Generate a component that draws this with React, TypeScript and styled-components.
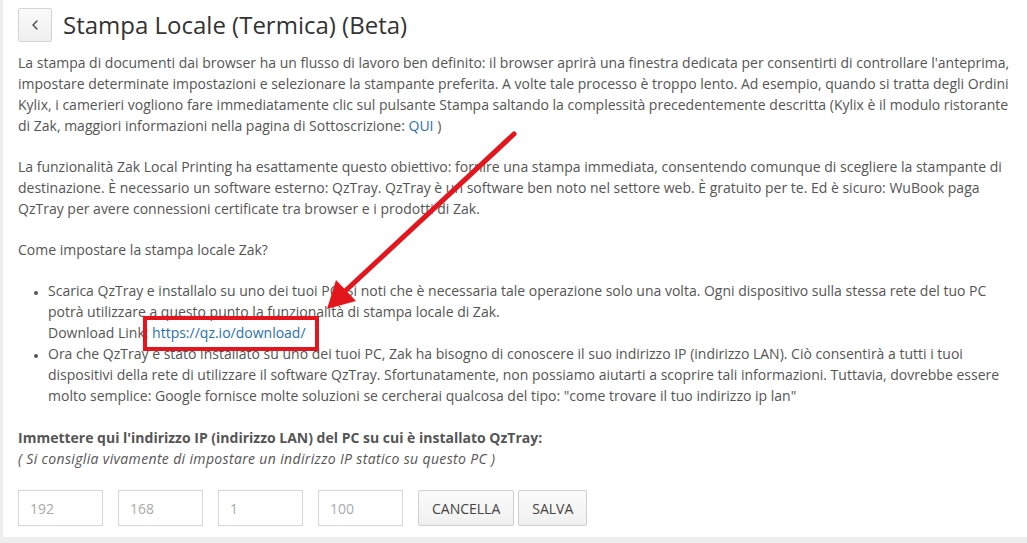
import React from 'react';
import styled, { createGlobalStyle } from 'styled-components';
import { ChevronLeft } from 'lucide-react';

const GlobalStyle = createGlobalStyle`
  * {
    margin: 0;
    padding: 0;
    box-sizing: border-box;
  }

  html, body {
    width: 100%;
    height: 100%;
    overflow: hidden;
    background-color: #eeeeee;
    font-family: "Open Sans", "Liberation Sans", sans-serif;
  }

  #root {
    width: 100%;
    height: 100%;
  }

  input, button {
    font-family: inherit;
  }
`;

const Page = styled.div`
  width: 100%;
  height: 100%;
  padding: 0 0 6px 3px;
`;

const Panel = styled.div`
  position: relative;
  height: 100%;
  background-color: #ffffff;
  padding: 8px 14px 0 15px;
  color: #555555;
  font-size: 14px;
  line-height: 21px;
`;

const Header = styled.div`
  display: flex;
  align-items: center;
  gap: 11px;
  margin-bottom: 10px;
`;

const BackButton = styled.button`
  width: 34px;
  height: 34px;
  display: flex;
  align-items: center;
  justify-content: center;
  border: 1px solid #d4d4d4;
  border-radius: 2px;
  background: linear-gradient(#fafafa, #efefef);
  color: #444;
  cursor: pointer;
`;

const Title = styled.h1`
  font-size: 24px;
  font-weight: 400;
  color: #333333;
  line-height: 34px;
`;

const Paragraph = styled.p`
  margin-bottom: 20px;
`;

const Link = styled.a`
  color: #2a6fb0;
  text-decoration: none;
`;

const List = styled.ul`
  margin: 0 0 21px 30px;
  list-style: disc;

  li::marker {
    font-size: 10px;
  }
`;

const Label = styled.div`
  font-weight: 700;
`;

const Hint = styled.div`
  font-style: italic;
  letter-spacing: 0.35px;
  margin-bottom: 21px;
`;

const FormRow = styled.div`
  display: flex;
  gap: 15px;
`;

const IpInput = styled.input`
  width: 85px;
  height: 36px;
  border: 1px solid #d6d6d6;
  padding: 0 11px;
  font-size: 14px;
  color: #999;
  background: #fff;
  outline: none;

  &::placeholder {
    color: #aaaaaa;
  }
`;

const Buttons = styled.div`
  display: flex;
  gap: 4px;
`;

const ActionButton = styled.button`
  height: 36px;
  padding: 0 13px;
  border: 1px solid #cfcfcf;
  border-radius: 2px;
  background: linear-gradient(#fbfbfb, #f0f0f0);
  color: #444;
  font-size: 14px;
  cursor: pointer;
`;

const Overlay = styled.svg`
  position: absolute;
  left: -3px;
  top: 0;
  pointer-events: none;
`;

const App: React.FC = () => {
  return (
    <>
      <GlobalStyle />
      <Page>
        <Panel>
          <Header>
            <BackButton>
              <ChevronLeft size={16} strokeWidth={2} />
            </BackButton>
            <Title>Stampa Locale (Termica) (Beta)</Title>
          </Header>
          <Paragraph>
            La stampa di documenti dai browser ha un flusso di lavoro ben definito: il browser aprirà una finestra dedicata per consentirti di controllare l'anteprima, impostare determinate impostazioni e selezionare la stampante preferita. A volte tale processo è troppo lento. Ad esempio, quando si tratta degli Ordini Kylix, i camerieri vogliono fare immediatamente clic sul pulsante Stampa saltando la complessità precedentemente descritta (Kylix è il modulo ristorante di Zak, maggiori informazioni nella pagina di Sottoscrizione: <Link href="#">QUI</Link> )
          </Paragraph>
          <Paragraph>
            La funzionalità Zak Local Printing ha esattamente questo obiettivo: fornire una stampa immediata, consentendo comunque di scegliere la stampante di destinazione. È necessario un software esterno: QzTray. QzTray è un software ben noto nel settore web. È gratuito per te. Ed è sicuro: WuBook paga QzTray per avere connessioni certificate tra browser e i prodotti di Zak.
          </Paragraph>
          <Paragraph>Come impostare la stampa locale Zak?</Paragraph>
          <List>
            <li>
              Scarica QzTray e installalo su uno dei tuoi PC. Si noti che è necessaria tale operazione solo una volta. Ogni dispositivo sulla stessa rete del tuo PC potrà utilizzare a questo punto la funzionalità di stampa locale di Zak.
              <br />
              Download Link: <Link href="#">https://qz.io/download/</Link>
            </li>
            <li>
              Ora che QzTray è stato installato su uno dei tuoi PC, Zak ha bisogno di conoscere il suo indirizzo IP (indirizzo LAN). Ciò consentirà a tutti i tuoi dispositivi della rete di utilizzare il software QzTray. Sfortunatamente, non possiamo aiutarti a scoprire tali informazioni. Tuttavia, dovrebbe essere molto semplice: Google fornisce molte soluzioni se cercherai qualcosa del tipo: "come trovare il tuo indirizzo ip lan"
            </li>
          </List>
          <Label>Immettere qui l'indirizzo IP (indirizzo LAN) del PC su cui è installato QzTray:</Label>
          <Hint>( Si consiglia vivamente di impostare un indirizzo IP statico su questo PC )</Hint>
          <FormRow>
            <IpInput placeholder="192" />
            <IpInput placeholder="168" />
            <IpInput placeholder="1" />
            <IpInput placeholder="100" />
            <Buttons>
              <ActionButton>CANCELLA</ActionButton>
              <ActionButton>SALVA</ActionButton>
            </Buttons>
          </FormRow>
          <Overlay width="1027" height="543" viewBox="0 0 1027 543">
            <line x1="514" y1="134" x2="342" y2="294" stroke="#e3161d" strokeWidth="5" strokeLinecap="round" />
            <polygon points="327,309 336,280 356,301" fill="#e3161d" />
            <rect x="145" y="318" width="172" height="31" fill="none" stroke="#e3161d" strokeWidth="4" />
          </Overlay>
        </Panel>
      </Page>
    </>
  );
};

export default App;
